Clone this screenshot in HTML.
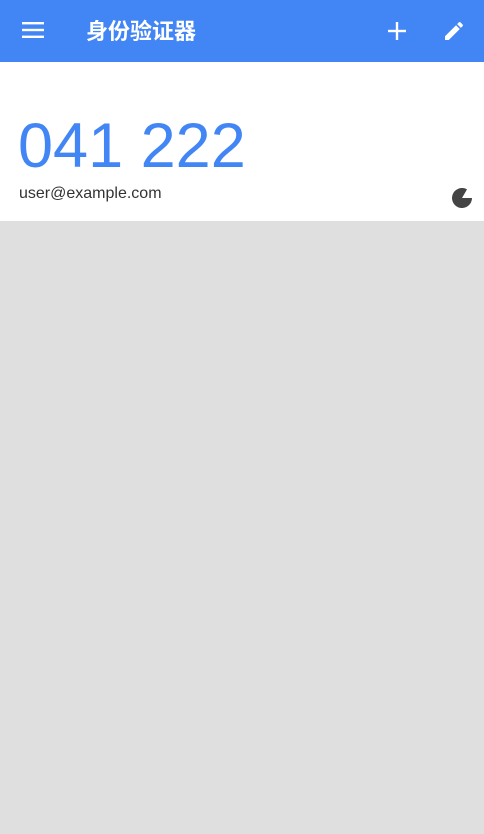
<!DOCTYPE html>
<html><head><meta charset="utf-8"><style>
body{margin:0;width:484px;height:834px;background:#dfdfdf;font-family:"Liberation Sans","Noto Sans CJK SC",sans-serif;overflow:hidden;position:relative}
.bar{position:absolute;left:0;top:0;width:484px;height:62px;background:#4285f4}
.title{position:absolute;left:86px;top:15px;color:#fff;font-size:22px;font-weight:bold;font-family:"Noto Sans CJK SC",sans-serif;line-height:30px}
.card{position:absolute;left:0;top:62px;width:484px;height:159px;background:#fff}
.code{position:absolute;left:18px;top:110px;font-size:63px;color:#4285f4;line-height:72px}
.email{position:absolute;left:19px;top:184px;font-size:16px;color:#333;line-height:20px}
</style></head><body>
<div class="bar"></div>
<svg style="position:absolute;left:22px;top:21px" width="22" height="18"><rect x="0" y="1" width="22" height="2.4" fill="#fff"/><rect x="0" y="7.8" width="22" height="2.4" fill="#fff"/><rect x="0" y="14.6" width="22" height="2.4" fill="#fff"/></svg>
<div class="title">身份验证器</div>
<svg style="position:absolute;left:387px;top:21px" width="20" height="20"><rect x="8.8" y="1" width="2.4" height="18" fill="#fff"/><rect x="1" y="8.8" width="18" height="2.4" fill="#fff"/></svg>
<svg style="position:absolute;left:442px;top:19px" width="24" height="24" viewBox="0 0 24 24"><path d="M3 17.25V21h3.75L17.81 9.94l-3.75-3.75L3 17.25zM20.71 7.04a1 1 0 0 0 0-1.41l-2.34-2.34a1 1 0 0 0-1.41 0l-1.83 1.83 3.75 3.75 1.83-1.83z" fill="#fff"/></svg>
<div class="card"></div>
<div class="code">041 222</div>
<div class="email">user@example.com</div>
<svg style="position:absolute;left:452px;top:188px" width="20" height="20" viewBox="0 0 20 20"><path d="M10 10 L15 1.34 A10 10 0 1 0 20 10 Z" fill="#444"/></svg>
</body></html>
